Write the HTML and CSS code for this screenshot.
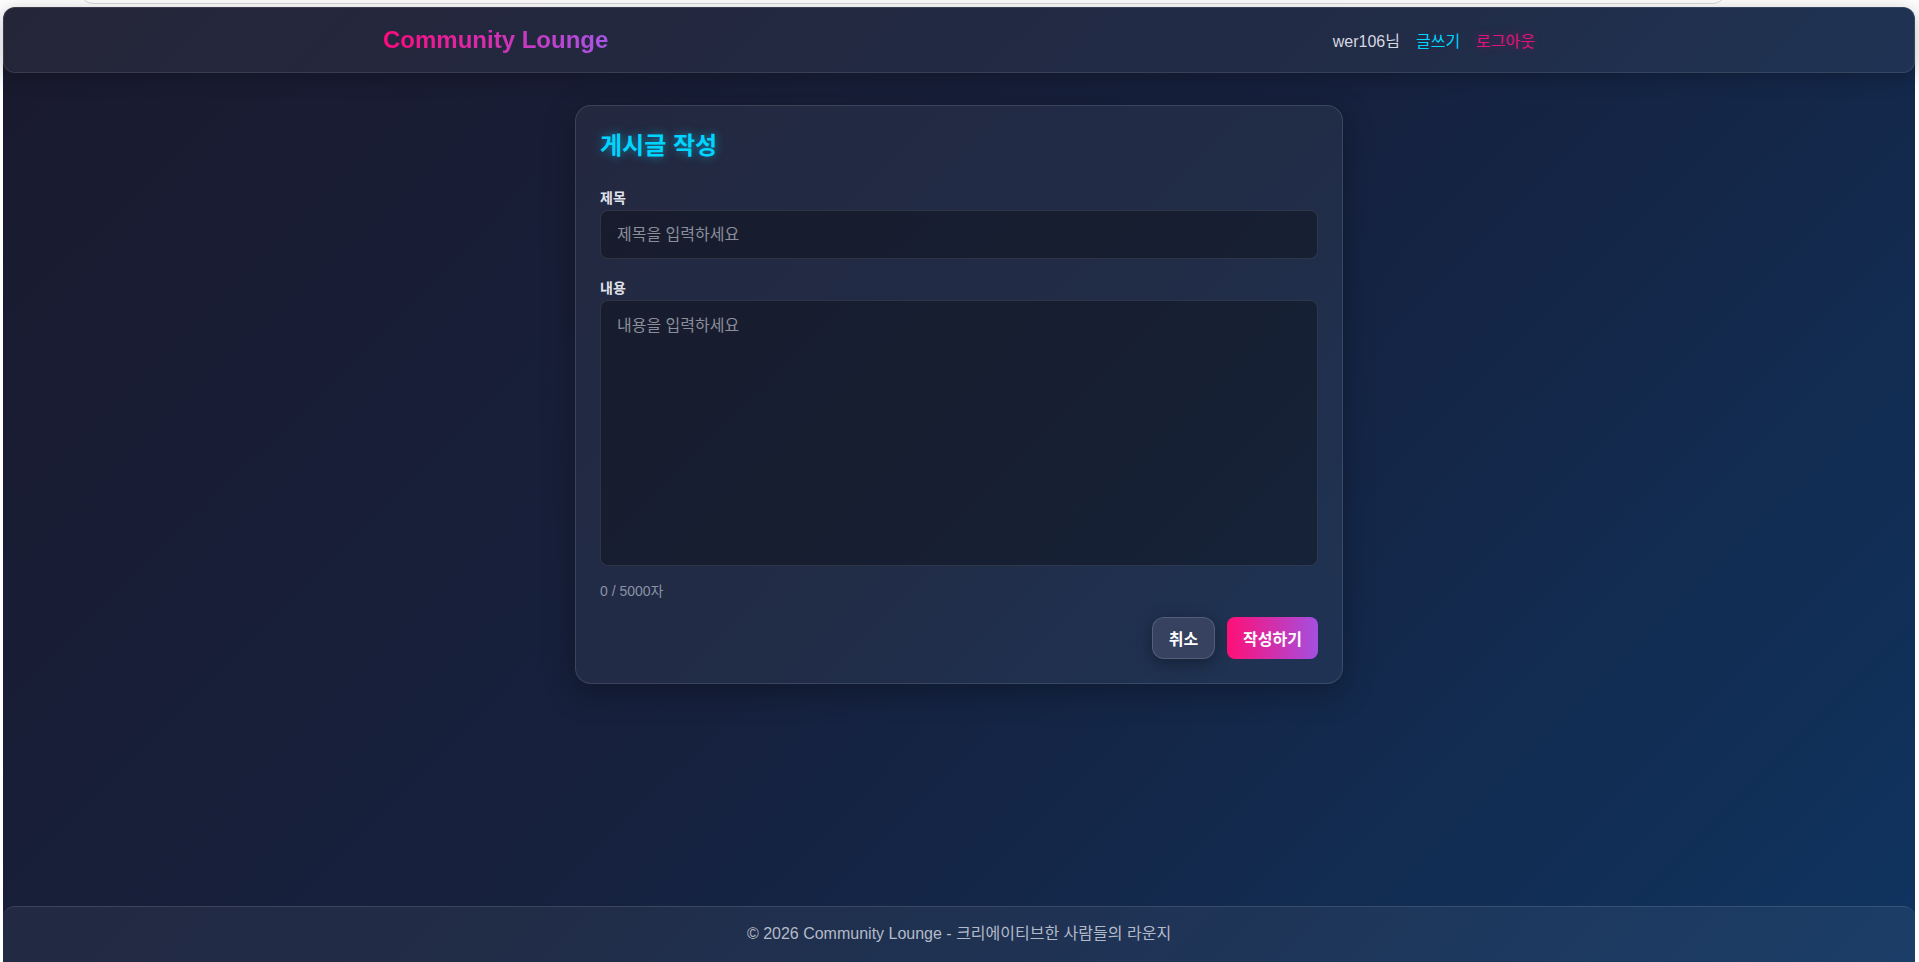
FILE: index.html
```html
<!DOCTYPE html>
<html lang="ko">
<head>
    <meta charset="UTF-8">
    <meta name="viewport" content="width=device-width, initial-scale=1.0">
    <title>게시글 작성 - Community Lounge</title>
    <link rel="stylesheet" href="styles.css">
</head>
<body>
    <div class="top-strip"><div class="top-pill"></div></div>
    <div class="app">
        <header class="site-header">
            <div class="container header-inner">
                <a href="#" class="logo">Community Lounge</a>
                <nav class="nav">
                    <span class="nav-user">wer106님</span>
                    <a href="#" class="nav-write">글쓰기</a>
                    <a href="#" class="nav-logout">로그아웃</a>
                </nav>
            </div>
        </header>

        <main class="main">
            <div class="write-card">
                <h2 class="write-title">게시글 작성</h2>
                <form id="write-form">
                    <div class="form-group">
                        <label for="title">제목</label>
                        <input type="text" id="title" placeholder="제목을 입력하세요" maxlength="100">
                    </div>
                    <div class="form-group form-group-last">
                        <label for="content">내용</label>
                        <textarea id="content" placeholder="내용을 입력하세요" maxlength="5000"></textarea>
                        <div class="char-count"><span id="count">0</span> / 5000자</div>
                    </div>
                    <div class="form-actions">
                        <button type="button" class="btn btn-cancel">취소</button>
                        <button type="submit" class="btn btn-submit">작성하기</button>
                    </div>
                </form>
            </div>
        </main>

        <footer class="site-footer">
            <p>&copy; 2026 Community Lounge - 크리에이티브한 사람들의 라운지</p>
        </footer>
    </div>

    <script>
        const content = document.getElementById('content');
        const count = document.getElementById('count');

        content.addEventListener('input', () => {
            count.textContent = content.value.length;
        });
    </script>
</body>
</html>
```

FILE: styles.css
```css
* {
    box-sizing: border-box;
}
html, body {
    height: 100%;
}
body {
    margin: 0;
    background: #ffffff;
    font-family: "Liberation Sans", "Noto Sans CJK KR", Arial, sans-serif;
    color: #e0e0e0;
    overflow: hidden;
}
a {
    text-decoration: none;
}

/* strip above the app frame */
.top-strip {
    height: 7px;
    overflow: hidden;
}
.top-pill {
    margin: -22px 0 0 80px;
    width: 1646px;
    height: 26px;
    border: 1px solid #d9d9d9;
    border-radius: 13px;
    background: #fff;
}

.app {
    height: calc(100% - 7px);
    margin: 0 4px 0 3px;
    display: flex;
    flex-direction: column;
    background: linear-gradient(135deg, #1a1a2e 0%, #16213e 50%, #0f3460 100%);
    border-radius: 12px 12px 0 0;
}

.container {
    max-width: 1200px;
    margin: 0 auto;
    padding: 0 24px;
}

/* header */
.site-header {
    height: 66px;
    background: rgba(255, 255, 255, 0.05);
    border: 1px solid rgba(255, 255, 255, 0.1);
    border-radius: 12px;
    box-shadow: 0 4px 20px rgba(0, 0, 0, 0.25);
}
.header-inner {
    height: 100%;
    display: flex;
    align-items: center;
    justify-content: space-between;
}
.logo {
    font-size: 24px;
    font-weight: bold;
    background: linear-gradient(90deg, #ff0a7c, #a855e8);
    -webkit-background-clip: text;
    background-clip: text;
    color: transparent;
}
.nav {
    display: flex;
    align-items: center;
    gap: 16px;
    font-size: 16px;
}
.nav-user {
    color: #d6d8e0;
}
.nav-write {
    color: #00d4ff;
}
.nav-logout {
    color: #e0137a;
    text-shadow: 0 0 8px rgba(255, 0, 128, 0.35);
}

/* main */
.main {
    flex: 1;
    padding-top: 32px;
}
.write-card {
    max-width: 768px;
    margin: 0 auto;
    padding: 24px;
    background: rgba(255, 255, 255, 0.05);
    border: 1px solid rgba(255, 255, 255, 0.12);
    border-radius: 16px;
    box-shadow: 0 8px 32px rgba(0, 0, 0, 0.3);
}
.write-title {
    margin: 0 0 29px;
    font-size: 24px;
    line-height: 31px;
    color: #00d4ff;
    text-shadow: 0 0 10px rgba(0, 212, 255, 0.55);
}
.form-group {
    margin-bottom: 21px;
}
.form-group-last {
    margin-bottom: 0;
}
.form-group label {
    display: block;
    margin-bottom: 4px;
    font-size: 14px;
    line-height: 16px;
    font-weight: bold;
    color: #e0e2ea;
}
.form-group input,
.form-group textarea {
    display: block;
    width: 100%;
    padding: 14px 16px;
    font-family: inherit;
    font-size: 16px;
    color: #e0e0e0;
    background: rgba(0, 0, 0, 0.3);
    border: 1px solid rgba(255, 255, 255, 0.1);
    border-radius: 8px;
    outline: none;
}
.form-group input {
    height: 49px;
}
.form-group textarea {
    height: 266px;
    resize: none;
    line-height: 22px;
}
.form-group input::placeholder,
.form-group textarea::placeholder {
    color: #8a8e9b;
}
.char-count {
    margin-top: 17px;
    font-size: 14px;
    line-height: 17px;
    color: #8a92a6;
}
.form-actions {
    display: flex;
    justify-content: flex-end;
    gap: 12px;
    margin-top: 17px;
}
.btn {
    height: 42px;
    padding: 0 16px;
    font-family: inherit;
    font-size: 16px;
    font-weight: bold;
    color: #fff;
    border: none;
    cursor: pointer;
}
.btn-cancel {
    background: #364260;
    border: 1px solid rgba(255, 255, 255, 0.15);
    border-radius: 12px;
    box-shadow: 0 4px 16px rgba(0, 0, 0, 0.35);
}
.btn-submit {
    background: linear-gradient(90deg, #ff0f76, #a44fe0);
    border-radius: 8px;
}

/* footer */
.site-footer {
    background: rgba(255, 255, 255, 0.05);
    border-top: 1px solid rgba(255, 255, 255, 0.12);
    border-radius: 12px 12px 0 0;
    text-align: center;
}
.site-footer p {
    margin: 0;
    padding: 17px 0 18px;
    font-size: 16px;
    line-height: 20px;
    color: #b4bac8;
}
```
